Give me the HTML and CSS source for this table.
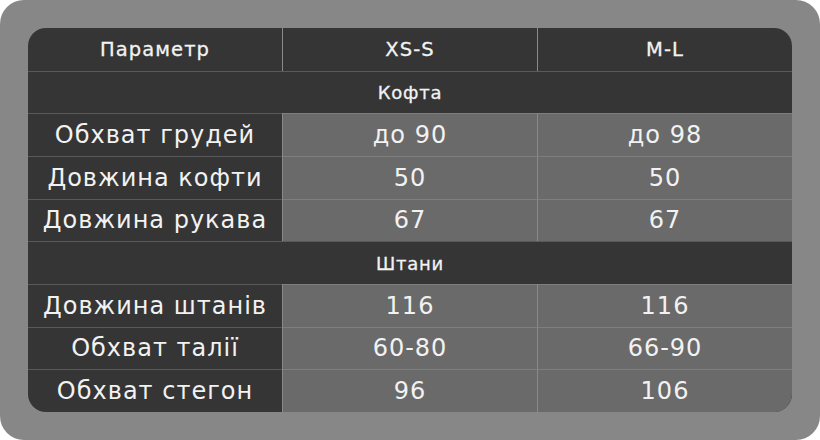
FILE: index.html
```html
<!DOCTYPE html>
<html lang="uk">
<head>
<meta charset="utf-8">
<title>Розмірна сітка</title>
<link rel="stylesheet" href="styles.css">
</head>
<body>
<div class="frame">
  <div class="table">
    <div class="cell head">Параметр</div>
    <div class="cell head sep">XS-S</div>
    <div class="cell head sep">M-L</div>

    <div class="cell section">Кофта</div>

    <div class="cell name">Обхват грудей</div>
    <div class="cell val sep">до 90</div>
    <div class="cell val sep">до 98</div>

    <div class="cell name">Довжина кофти</div>
    <div class="cell val sep">50</div>
    <div class="cell val sep">50</div>

    <div class="cell name">Довжина рукава</div>
    <div class="cell val sep">67</div>
    <div class="cell val sep">67</div>

    <div class="cell section">Штани</div>

    <div class="cell name">Довжина штанів</div>
    <div class="cell val sep">116</div>
    <div class="cell val sep">116</div>

    <div class="cell name">Обхват талії</div>
    <div class="cell val sep">60-80</div>
    <div class="cell val sep">66-90</div>

    <div class="cell name">Обхват стегон</div>
    <div class="cell val sep">96</div>
    <div class="cell val sep">106</div>
  </div>
</div>
</body>
</html>
```

FILE: styles.css
```css
html, body {
  margin: 0;
  padding: 0;
  background: #ffffff;
}

.frame {
  width: 820px;
  height: 440px;
  box-sizing: border-box;
  padding: 28px;
  background: #878787;
  border-radius: 24px;
}

.table {
  display: grid;
  grid-template-columns: 254px 255px 255px;
  grid-template-rows: repeat(9, 1fr);
  height: 384px;
  border-radius: 18px;
  overflow: hidden;
  background: #353535;
  font-family: "DejaVu Sans", "Noto Sans", sans-serif;
  color: #f2f2f2;
}

.cell {
  display: flex;
  align-items: center;
  justify-content: center;
  white-space: nowrap;
  border-top: 1px solid #5a5a5a;
}

.head {
  border-top: none;
  font-size: 19.5px;
  letter-spacing: 1.1px;
  -webkit-text-stroke: 0.3px currentColor;
}

.section {
  grid-column: 1 / -1;
  font-size: 18px;
  letter-spacing: 0.8px;
  -webkit-text-stroke: 0.3px currentColor;
}

.name {
  font-size: 24px;
  letter-spacing: 1px;
}

.val {
  font-size: 24px;
  letter-spacing: 1px;
  background: #6a6a6a;
  border-top-color: #7e7e7e;
}

.sep {
  border-left: 1px solid #8a8a8a;
}
```
